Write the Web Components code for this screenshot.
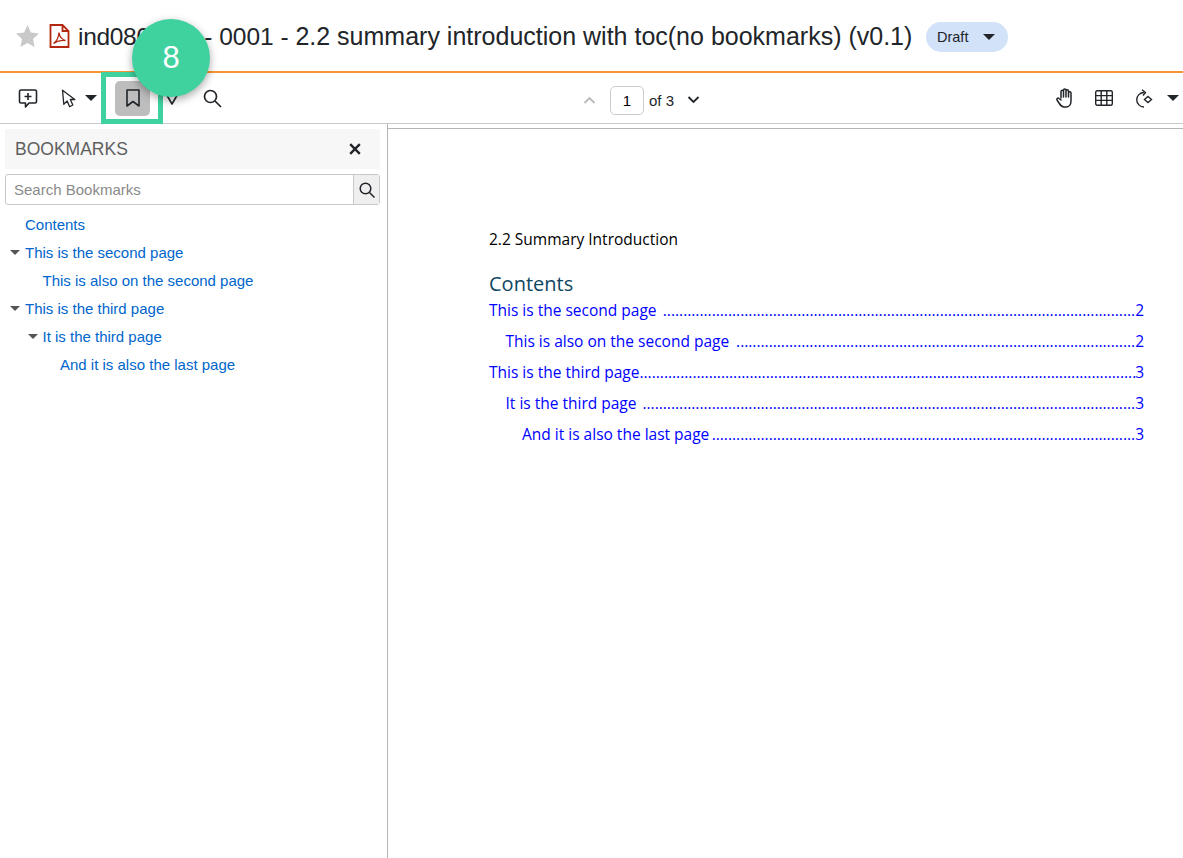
<!DOCTYPE html>
<html><head><meta charset="utf-8"><style>
html,body{margin:0;padding:0;height:100%;background:#fff;overflow:hidden}
body{font-family:"Liberation Sans",Arial,sans-serif}
</style></head><body>
<template id="t-app"><style>
:host{display:flex;flex-direction:column;width:1183px;height:858px;position:relative;overflow:hidden;color:#212529}
.body{display:flex;flex:1;min-height:0}
.frame{position:absolute;left:101px;top:72px;width:52px;height:42px;border:5px solid #3fd29f}
.badge{position:absolute;left:132px;top:19px;width:78px;height:78px;border-radius:50%;background:#3fd29f;color:#fff;font-size:31px;display:flex;align-items:center;justify-content:center;box-shadow:0 3px 8px rgba(0,0,0,.35)}
</style>
<doc-header></doc-header><doc-toolbar></doc-toolbar>
<div class="body"><bookmark-panel></bookmark-panel><pdf-page></pdf-page></div>
<div class="frame"></div><div class="badge">8</div></template>

<template id="t-header"><style>
:host{display:flex;align-items:center;height:71px;border-bottom:2px solid #f7962f;box-sizing:content-box;padding-left:15px;white-space:nowrap}
svg{display:block;flex:none}
.pdf{margin-left:9px}
h1{margin:0 0 0 8px;font:400 24.5px "Liberation Sans",sans-serif;color:#212529;width:834px;flex:none;position:relative;top:1px}
h1 i{font-style:normal;letter-spacing:-.3px}
h1 span{letter-spacing:1.6px}
h1 b{font-weight:400;font-size:25px}
.st{margin-left:14px;background:#d2e2f9;border-radius:15px;height:30px;width:82px;display:flex;align-items:center;font-size:14.5px;color:#212529;padding-left:11px;box-sizing:border-box;position:relative;top:1px}
.st svg{margin-left:15px}
</style>
<svg width="25" height="24" viewBox="0 0 25 24"><path d="M12.5 1l3.4 7.4 8.1 1-6 5.5 1.6 8-7.1-4-7.1 4 1.6-8-6-5.5 8.1-1z" fill="#c9c9c9"/></svg>
<svg class="pdf" width="21" height="24" viewBox="0 0 21 24" fill="none" stroke="#b3260f" stroke-width="1.8"><path d="M1.5 1h12l6 6v16h-18zM13.500 1v6h6"/><path stroke-width="1.3" d="M4.500 19.500c3-2 5-6 5.500-11 .5 4 3 7 6.500 8-4-.5-8.500.5-12 3z"/></svg>
<h1><i>ind08</i><span>0000</span> - 0001 - <b>2.2 summary introduction with toc(no bookmarks) (v0.1)</b></h1>
<div class="st">Draft<svg width="12" height="6" viewBox="0 0 12 6"><path d="M0 0h12L6 6z" fill="#212529"/></svg></div></template>

<template id="t-toolbar"><style>
:host{display:grid;grid-template-columns:1fr auto 1fr;align-items:center;height:50px;border-bottom:1px solid #c8c8c8;white-space:nowrap;color:#212529}
.l,.r,.c{display:flex;align-items:center}
.l{padding-left:18px}.r{justify-content:flex-end}
svg{display:block;flex:none}
.on{width:35px;height:35px;background:#bdbdbd;border-radius:5px;display:flex;align-items:center;justify-content:center;margin-left:18px}
.c{position:relative;left:50px;top:2px;font-size:15px}
.num{width:34px;height:29px;box-sizing:border-box;border:1px solid #ccc;border-radius:5px;display:flex;align-items:center;justify-content:center;margin:0 5px 0 14px;color:#000}
</style>
<div class="l">
<svg width="20" height="21" viewBox="0 0 20 21" fill="none" stroke="#212529" stroke-width="1.6" stroke-linejoin="round"><path d="M3 2h14a1.500 1.500 0 0 1 1.500 1.500v10A1.500 1.500 0 0 1 17 15h-6l-3.500 4v-4H3a1.500 1.500 0 0 1-1.500-1.500v-10A1.500 1.500 0 0 1 3 2zM10 5v7M6.500 8.500h7"/></svg>
<svg style="margin-left:23px" width="15" height="19" viewBox="0 0 15 19" fill="none" stroke="#212529" stroke-width="1.300" stroke-linejoin="round"><path d="M1.500 1.200L13.800 10.500H9.300L11.800 16L8.600 17.800L6.200 12L2.800 15.200z"/></svg>
<svg style="margin-left:9px" width="12" height="6" viewBox="0 0 12 6"><path d="M0 0h12L6 6z" fill="#212529"/></svg>
<div class="on"><svg width="14" height="18" viewBox="0 0 14 18" fill="none" stroke="#212529" stroke-width="1.6" stroke-linejoin="round"><path d="M1 1h12v16l-6-4.500L1 17z"/></svg></div>
<svg style="margin-left:14px" width="16" height="14" viewBox="0 0 16 14" fill="none" stroke="#212529" stroke-width="1.6" stroke-linejoin="round"><path d="M1 1l7 12 7-12"/></svg>
<svg style="margin-left:23px" width="19" height="19" viewBox="0 0 19 19" fill="none" stroke="#212529" stroke-width="1.7"><circle cx="7.500" cy="7.500" r="6"/><path d="M12 12l6 6"/></svg>
</div>
<div class="c">
<svg width="13" height="8" viewBox="0 0 13 8" fill="none" stroke="#b9b9b9" stroke-width="1.800"><path d="M1.500 7l5-5 5 5"/></svg>
<span class="num">1</span><span>of 3</span>
<svg style="margin-left:13px" width="13" height="8" viewBox="0 0 13 8" fill="none" stroke="#212529" stroke-width="1.800"><path d="M1.500 1l5 5 5-5"/></svg>
</div>
<div class="r">
<svg width="18" height="20" viewBox="0 0 18 20" fill="none" stroke="#212529" stroke-width="1.500" stroke-linejoin="round" stroke-linecap="round"><path d="M5 10V3.500a1.200 1.200 0 0 1 2.500 0V9M7.500 9V2.200a1.200 1.200 0 0 1 2.500 0V9M10 9V3a1.200 1.200 0 0 1 2.500 0v6M12.500 9V5a1.200 1.200 0 0 1 2.500 0v8c0 3.500-2 6-5 6H8c-2.500 0-3.500-1.500-5-4l-2-3c-.6-1.500 1-2.500 2-1.500L5 12"/></svg>
<svg style="margin-left:21px" width="18" height="16" viewBox="0 0 18 16" fill="none" stroke="#212529" stroke-width="1.400"><rect x=".7" y=".7" width="16.600" height="14.600" rx="1.500"/><path d="M6.200 1v14M11.800 1v14M1 5.600h16M1 10.400h16"/></svg>
<svg style="margin-left:23px" width="18" height="19" viewBox="0 0 18 19" fill="none" stroke="#212529" stroke-width="1.400"><path d="M8 3.500a7 7 0 1 0 0 14.500"/><path d="M6 .8L9.500 3.500 7 6.500" stroke-linejoin="round"/><path d="M12 7.500l3.500 3-3.500 3-3.500-3z"/></svg>
<svg style="margin:0 4px 0 13px" width="12" height="6" viewBox="0 0 12 6"><path d="M0 0h12L6 6z" fill="#212529"/></svg>
</div></template>

<template id="t-panel"><style>
:host{display:block;flex:none;border-right:1px solid #b4b4b4;padding:5px 0 0 5px;box-sizing:border-box;width:388px}
.wrap{width:375px}
.hd{height:40px;background:#f7f7f7;display:flex;align-items:center;justify-content:space-between;padding:0 19px 0 10px;box-sizing:border-box;font-size:17.5px;color:#5f5f5f}
.search{display:flex;height:31px;margin-top:5px;border:1px solid #c8c8c8;border-radius:3px;box-sizing:border-box;font-size:15px;color:#8a8a8a}
.search div:first-child{flex:1;padding-left:8px;line-height:29px}
.btn{width:25px;background:#efefef;border-left:1px solid #c8c8c8;display:flex;align-items:center;justify-content:center}
.tree{margin-top:5px}
</style><div class="wrap">
<div class="hd"><span>BOOKMARKS</span><svg width="12" height="12" viewBox="0 0 12 12" stroke="#212529" stroke-width="2.400" fill="none"><path d="M1.200 1.200l9.600 9.600M10.800 1.200l-9.600 9.600"/></svg></div>
<div class="search"><div>Search Bookmarks</div><div class="btn"><svg width="16" height="16" viewBox="0 0 16 16" fill="none" stroke="#212529" stroke-width="1.500"><circle cx="6.500" cy="6.500" r="5.300"/><path d="M10.500 10.500l5 5"/></svg></div></div>
<div class="tree">
<bm-item level="0">Contents</bm-item>
<bm-item level="0" open>This is the second page</bm-item>
<bm-item level="1">This is also on the second page</bm-item>
<bm-item level="0" open>This is the third page</bm-item>
<bm-item level="1" open>It is the third page</bm-item>
<bm-item level="2">And it is also the last page</bm-item>
</div></div></template>

<template id="t-item"><style>
:host{display:flex;align-items:center;height:28px;font-size:15px;color:#0066cc;white-space:nowrap}
.tw{width:20px;flex:none;display:flex;justify-content:flex-end;padding-right:5px;box-sizing:border-box}
.ind{flex:none}
svg{display:block}
</style><span class="ind"></span><span class="tw"><svg width="10" height="5" viewBox="0 0 10 5"><path d="M0 0h10L5 5z" fill="#555"/></svg></span><slot></slot></template>

<template id="t-page"><style>
:host{display:block;flex:1;min-width:0;border-top:1px solid #b4b4b4;margin-top:4px;background:#fff;font-family:"Open Sans",sans-serif;color:#0000ff;font-size:15.5px;padding:0 39px 0 101px;box-sizing:border-box}
.sum{color:#000;margin-top:100px;line-height:20px}
h2{margin:22px 0 0;font-weight:400;font-size:20px;color:#0f4761;line-height:26px}
.rows{margin-top:1px}
</style>
<div class="sum">2.2 Summary Introduction</div>
<h2>Contents</h2>
<div class="rows">
<toc-row page="2" dots="116">This is the second page </toc-row>
<toc-row page="2" dots="98" level="1">This is also on the second page </toc-row>
<toc-row page="3" dots="122">This is the third page</toc-row>
<toc-row page="3" dots="121" level="1">It is the third page </toc-row>
<toc-row page="3" dots="104" level="2">And it is also the last page</toc-row>
</div></template>

<template id="t-row"><style>
:host{display:flex;height:31px;line-height:24px;white-space:pre}
.d{flex:1;min-width:0;text-align:right}
</style><slot></slot><span class="d"></span><span class="p"></span></template>

<script>
const mk=(name,tid,init)=>customElements.define(name,class extends HTMLElement{
  constructor(){super();this.attachShadow({mode:"open"}).appendChild(document.getElementById(tid).content.cloneNode(true))}
  connectedCallback(){init&&init.call(this,this.shadowRoot)}
});
mk("doc-app","t-app");mk("doc-header","t-header");mk("doc-toolbar","t-toolbar");mk("bookmark-panel","t-panel");mk("pdf-page","t-page");
mk("bm-item","t-item",function(s){
  const l=+this.getAttribute("level")||0;
  s.querySelector(".ind").style.width=(l*17.500)+"px";
  if(!this.hasAttribute("open"))s.querySelector("svg").style.visibility="hidden";
});
mk("toc-row","t-row",function(s){
  s.querySelector(".p").textContent=this.getAttribute("page");
  const l=+this.getAttribute("level")||0;this.style.paddingLeft=(l*16.500)+"px";
  s.querySelector(".d").textContent=".".repeat(+this.getAttribute("dots"));
});
</script>
<doc-app></doc-app>
</body></html>
